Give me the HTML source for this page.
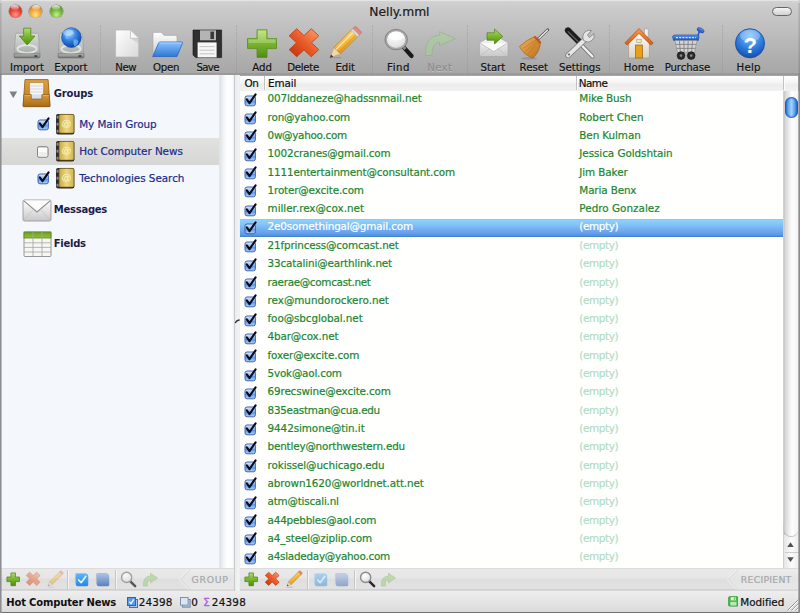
<!DOCTYPE html>
<html><head><meta charset="utf-8"><title>Nelly.mml</title>
<style>
html,body{margin:0;padding:0;}
body{-webkit-text-stroke-width:0.2px;width:800px;height:613px;overflow:hidden;background:#d4d4d4;font-family:"DejaVu Sans","Liberation Sans",sans-serif;font-size:10.2px;color:#000;position:relative;}
#win{position:absolute;left:0;top:0;width:800px;height:613px;background:#b4b4b4;border-radius:3px 3px 0 0;overflow:hidden;}
#chrome{position:absolute;left:0;top:0;width:800px;height:75px;background:linear-gradient(#d6d6d6 0,#cecece 3px,#c3c3c3 22px,#b0b0b0 56px,#a7a7a7 73px,#9a9a9a 73.5px,#9a9a9a 75px);}
#chrome:before{content:"";position:absolute;left:0;top:0;width:800px;height:1px;background:#e4e4e4;}
.tl{position:absolute;top:4.8px;width:13px;height:13px;border-radius:50%;box-shadow:0 0 0 0.5px rgba(0,0,0,.35),0 1px 0 rgba(255,255,255,.5);}
.tl:after{content:"";position:absolute;left:2.5px;top:0.5px;width:8px;height:5px;border-radius:50%;background:linear-gradient(rgba(255,255,255,.85),rgba(255,255,255,.1));}
.ttl{position:absolute;top:3.5px;line-height:16px;color:#1a1a1a;white-space:nowrap;}
#pill{position:absolute;left:772px;top:6.8px;width:18px;height:7.4px;border-radius:5px;border:1px solid #666;background:linear-gradient(#f4f4f4,#d0d0d0);}
.ti{position:absolute;top:27px;width:32px;height:32px;overflow:visible;}
.tl_{position:absolute;top:60.6px;width:80px;text-align:center;line-height:14px;font-size:10.2px;color:#111;text-shadow:0 1px 0 rgba(255,255,255,.3);white-space:nowrap;}
.tl_.dis{color:#8d8d8d;}
.sep{position:absolute;top:25px;width:0;height:48px;border-left:1px dotted #8a8a8a;opacity:.45;}
#side{position:absolute;left:1px;top:75px;width:218px;height:493px;background:#f4f7fb;}
#sidesel{position:absolute;left:0;top:63px;width:218px;height:27px;background:linear-gradient(#e1e1e1,#d6d6d4);}
.sh{position:absolute;font-weight:bold;color:#1c1c4a;line-height:14px;white-space:nowrap;}
.si{position:absolute;color:#1a2c8a;line-height:14px;white-space:nowrap;}
#strack{position:absolute;left:219px;top:75px;width:15px;height:493px;background:linear-gradient(90deg,#e4e8ea 0,#dfe3e6 1px,#eef1f3 4px,#fcfeff 8px,#fbfdfd 13px,#eef0f0 15px);}
#split{position:absolute;left:234px;top:75px;width:6.5px;height:516px;background:linear-gradient(90deg,#c4c8c8 0,#c8cccc 1px,#eceeee 1.5px,#f2f4f4 5px,#e4e6e6 6.5px);}
#table{position:absolute;left:240px;top:75px;width:544px;height:493px;background:#fffffd;overflow:hidden;}
#thead{position:absolute;left:240px;top:75px;width:558px;height:16px;background:linear-gradient(#ffffff 0,#f4f4f4 7px,#ececec 8px,#f1f1f1 15px,#9c9c9c 15px,#9c9c9c 16px);border-top:1px solid #a4a4a4;box-sizing:border-box;}
#thead span{position:absolute;top:0px;line-height:15px;color:#111;white-space:nowrap;}
#thead i{position:absolute;top:0;width:1px;height:14px;background:#c2c2c2;box-shadow:1px 0 0 #fcfcfc;}
.row{position:absolute;left:240px;width:544px;height:18.32px;line-height:18.32px;white-space:nowrap;}
.row.sel{background:linear-gradient(#8cc6ec 0,#8cd0fc 8%,#84c4f8 30%,#72acf0 60%,#66a0ea 78%,#5296ee 90%,#4a84d0 97%,#4a84d0 100%);height:18.3px;margin-top:-0.4px}

.row .cb{position:absolute;left:4px;top:0.5px;width:16px;height:17px;}
.em_{position:absolute;left:27.55px;top:-1.9px;color:#1a8630;font-size:10.4px;}
.nm{position:absolute;left:339.3px;top:-1.9px;color:#1a8630;font-size:10.4px;}
.nm.em{color:#b2dcc6;}
.row.sel .em_,.row.sel .nm{color:#fff;}
#vs{position:absolute;left:783px;top:91px;width:16px;height:477px;background:linear-gradient(90deg,#dcdcdc 0,#c4c4c4 1px,#d8d8d8 2.5px,#e6e6e6 5px,#fdfdfd 9px,#f6f6f6 14px,#ececec 16px);}
#thumb{position:absolute;left:785px;top:97px;width:13px;height:21px;border-radius:7px;background:linear-gradient(90deg,#2a6fd0 0,#6fb0f5 30%,#a5d3ff 50%,#5aa0ee 75%,#1e5fc0 100%);box-shadow:inset 0 0 2px 1px #1a56b0;}
#bbarL{position:absolute;left:1px;top:568px;width:233px;height:23px;background:linear-gradient(#cfcfcf 0,#e9e9e9 1px,#e6e6e6 10px,#dedede 11px,#e2e2e2 21px,#bdbdbd 22px,#f2f2f2 23px);}
#bbarR{position:absolute;left:240px;top:568px;width:559px;height:23px;background:linear-gradient(#cfcfcf 0,#e9e9e9 1px,#e6e6e6 10px,#dedede 11px,#e2e2e2 21px,#bdbdbd 22px,#f2f2f2 23px);}
#status{position:absolute;left:1px;top:591px;width:798px;height:22px;background:linear-gradient(#eeeeee,#e6e6e6 40%,#dadada);}
#botline{position:absolute;left:0;top:611.6px;width:800px;height:1.4px;background:#707070;}
.st{position:absolute;top:595.7px;line-height:14px;color:#111;white-space:nowrap;}
.lab{position:absolute;top:573.2px;line-height:13px;color:#a6a8ac;white-space:nowrap;}
.bsep{position:absolute;top:570px;width:1px;height:19px;background:#c6c6c6;box-shadow:1px 0 0 #f4f4f4;}
.bi{position:absolute;overflow:visible;}
#lborder{position:absolute;left:0;top:75px;width:2px;height:538px;background:linear-gradient(90deg,#8c8e92 0,#8c8e92 1.1px,rgba(140,142,146,0) 2px);}
#lborder2{position:absolute;left:0;top:3px;width:2px;height:72px;background:linear-gradient(90deg,rgba(0,0,0,.13) 0,rgba(0,0,0,.13) 1px,rgba(0,0,0,0) 2px);}
#rborder{position:absolute;left:798px;top:75px;width:2px;height:538px;background:linear-gradient(270deg,#8a8a8a 0,#8a8a8a 1.2px,rgba(138,138,138,0) 2px);}
#rborder2{position:absolute;left:798px;top:3px;width:2px;height:72px;background:linear-gradient(270deg,rgba(0,0,0,.13) 0,rgba(0,0,0,.13) 1px,rgba(0,0,0,0) 2px);}
</style></head><body>
<svg width="0" height="0" style="position:absolute">
<defs>
<linearGradient id="cbg" x1="0" y1="0" x2="0" y2="1"><stop offset="0" stop-color="#dfeafb"/><stop offset=".45" stop-color="#8ab8f0"/><stop offset=".55" stop-color="#5e98e8"/><stop offset="1" stop-color="#a6d6fc"/></linearGradient>
<symbol id="cbx" viewBox="0 0 16 17"><rect x="1" y="4" width="10.4" height="9.8" rx="2" fill="url(#cbg)" stroke="#4464b0" stroke-width="1"/><path d="M2.8 7.4 L5.5 11.2 L11.6 2.3" fill="none" stroke="#0a0a1e" stroke-width="2.1" stroke-linecap="round" stroke-linejoin="round"/></symbol>
<symbol id="cbe" viewBox="0 0 16 17"><rect x="0.4" y="3.8" width="10.6" height="10.4" rx="1.6" fill="#fdfdfd" stroke="#767676" stroke-width="1"/><rect x="1.6" y="9" width="8.2" height="4.4" rx="1" fill="#ededed"/></symbol>
<linearGradient id="gBox" x1="0" y1="0" x2="0" y2="1"><stop offset="0" stop-color="#e0a040"/><stop offset="1" stop-color="#b87420"/></linearGradient>
<linearGradient id="gBook" x1="0" y1="0" x2="1" y2="0"><stop offset="0" stop-color="#c8a840"/><stop offset=".5" stop-color="#ecd882"/><stop offset="1" stop-color="#d0b450"/></linearGradient>
<linearGradient id="gFld" x1="0" y1="0" x2="0" y2="1"><stop offset="0" stop-color="#6e9e20"/><stop offset="1" stop-color="#92c03c"/></linearGradient>
<linearGradient id="gBoxF" x1="0" y1="0" x2="0" y2="1"><stop offset="0" stop-color="#d89a38"/><stop offset="1" stop-color="#a86a18"/></linearGradient>
<symbol id="book" viewBox="0 0 20 24" preserveAspectRatio="none"><rect x="1" y="1" width="18" height="22" rx="2" fill="#2a2a2a"/><rect x="4" y="1.5" width="14.5" height="20" rx="1.5" fill="url(#gBook)" stroke="#8a6210" stroke-width=".6"/><rect x="1.5" y="3" width="2" height="3" fill="#8a8a8a"/><rect x="1.5" y="10.5" width="2" height="3" fill="#8a8a8a"/><rect x="1.5" y="18" width="2" height="3" fill="#8a8a8a"/><text x="11.3" y="15" text-anchor="middle" font-family="Liberation Sans,sans-serif" font-size="10" fill="#fff6c8">@</text></symbol>
<linearGradient id="gChk" x1="0" y1="0" x2="0" y2="1"><stop offset="0" stop-color="#5ab4f6"/><stop offset="1" stop-color="#2a86e4"/></linearGradient>
<linearGradient id="gUnchk" x1="0" y1="0" x2="0" y2="1"><stop offset="0" stop-color="#a8c0e4"/><stop offset="1" stop-color="#5a80bc"/></linearGradient>
<linearGradient id="gChev" x1="0" y1="0" x2="0" y2="1"><stop offset="0" stop-color="#ececec"/><stop offset=".5" stop-color="#e4e4e4"/><stop offset="1" stop-color="#e8e8e8"/></linearGradient>

<linearGradient id="gGreen" x1="0" y1="0" x2="0" y2="1"><stop offset="0" stop-color="#b5dc6a"/><stop offset=".5" stop-color="#7ab52e"/><stop offset="1" stop-color="#4f8c14"/></linearGradient>
<linearGradient id="gRed" x1="0" y1="0" x2="0" y2="1"><stop offset="0" stop-color="#f6905a"/><stop offset=".5" stop-color="#ea5a28"/><stop offset="1" stop-color="#c83a10"/></linearGradient>
<linearGradient id="gTray" x1="0" y1="0" x2="0" y2="1"><stop offset="0" stop-color="#d8dad8"/><stop offset=".6" stop-color="#c0c4c0"/><stop offset="1" stop-color="#a4a8a4"/></linearGradient>
<linearGradient id="gTrayF" x1="0" y1="0" x2="0" y2="1"><stop offset="0" stop-color="#b9bdb9"/><stop offset="1" stop-color="#6e726e"/></linearGradient>
<radialGradient id="gGlobe" cx=".4" cy=".3" r=".75"><stop offset="0" stop-color="#9cd0ff"/><stop offset=".5" stop-color="#2f7ee0"/><stop offset="1" stop-color="#0b3f9a"/></radialGradient>
<linearGradient id="gPage" x1="0" y1="0" x2="1" y2="1"><stop offset="0" stop-color="#ffffff"/><stop offset="1" stop-color="#d9d9d9"/></linearGradient>
<linearGradient id="gFold" x1="0" y1="0" x2="0" y2="1"><stop offset="0" stop-color="#8cc4ff"/><stop offset="1" stop-color="#2c76d6"/></linearGradient>
<linearGradient id="gFoldB" x1="0" y1="0" x2="0" y2="1"><stop offset="0" stop-color="#ffffff"/><stop offset="1" stop-color="#c9ccd0"/></linearGradient>
<linearGradient id="gPencil" x1="0" y1="0" x2="1" y2="1"><stop offset="0" stop-color="#ffd66a"/><stop offset="1" stop-color="#e89a1a"/></linearGradient>
<radialGradient id="gLens" cx=".4" cy=".3" r=".8"><stop offset="0" stop-color="#ffffff"/><stop offset=".7" stop-color="#e4e4e4"/><stop offset="1" stop-color="#bdbdbd"/></radialGradient>
<linearGradient id="gEnv" x1="0" y1="0" x2="0" y2="1"><stop offset="0" stop-color="#ffffff"/><stop offset="1" stop-color="#c8c8c8"/></linearGradient>
<linearGradient id="gBroom" x1="0" y1="0" x2="1" y2="1"><stop offset="0" stop-color="#f2b45a"/><stop offset="1" stop-color="#b8701a"/></linearGradient>
<linearGradient id="gMetal" x1="0" y1="0" x2="1" y2="0"><stop offset="0" stop-color="#f4f4f4"/><stop offset="1" stop-color="#9a9a9a"/></linearGradient>
<linearGradient id="gRoof" x1="0" y1="0" x2="0" y2="1"><stop offset="0" stop-color="#f79a4a"/><stop offset="1" stop-color="#d85a12"/></linearGradient>
<linearGradient id="gWall" x1="0" y1="0" x2="0" y2="1"><stop offset="0" stop-color="#ffffff"/><stop offset="1" stop-color="#d8d2c4"/></linearGradient>
<radialGradient id="gHelp" cx=".5" cy=".25" r=".85"><stop offset="0" stop-color="#7cc0ff"/><stop offset=".55" stop-color="#2a78dc"/><stop offset="1" stop-color="#0d3f9c"/></radialGradient>
<linearGradient id="gCart" x1="0" y1="0" x2="0" y2="1"><stop offset="0" stop-color="#5a9af0"/><stop offset="1" stop-color="#1a4fb8"/></linearGradient>
</defs></svg>
<div id="win">
<div id="chrome">
 <div class="tl" style="left:8.8px;background:radial-gradient(circle at 50% 75%,#ff9a8a 0,#e8463a 45%,#a81c12 100%)"></div>
 <div class="tl" style="left:29.3px;background:radial-gradient(circle at 50% 75%,#ffe28a 0,#f0a63a 45%,#b8660e 100%)"></div>
 <div class="tl" style="left:49.8px;background:radial-gradient(circle at 50% 75%,#c8f08a 0,#74b83a 45%,#3a7a14 100%)"></div>
 <span class="ttl" style="left:369.30px;font-size:12.3px;letter-spacing:-0.021px;">Nelly.mml</span>
 <div id="pill"></div>
 <svg class="ti" style="left:11px" viewBox="0 0 32 32"><path d="M4.6 7.2 Q4.8 6.2 5.8 6.2 L26.2 6.2 Q27.2 6.2 27.4 7.2 L29 26.8 L3 26.8 Z" fill="url(#gTray)" stroke="#9a9e9a" stroke-width=".7"/><ellipse cx="16" cy="22" rx="9.6" ry="3.9" fill="none" stroke="#f4f4f4" stroke-width="2" opacity=".65"/><path d="M3 26.8 L29 26.8 L29 29.8 Q29 31 27.8 31 L4.2 31 Q3 31 3 29.8 Z" fill="url(#gTrayF)" stroke="#5e625e" stroke-width=".5"/><rect x="23.4" y="28.4" width="3" height="1.3" fill="#2a2a2a"/><path d="M12.6 1.2 L19.8 1.2 L19.8 9 L24 9 L16.2 18 L8.4 9 L12.6 9 Z" fill="url(#gGreen)" stroke="#4a7f16" stroke-width=".7"/></svg>
<span class="tl_" style="left:-12.99px;letter-spacing:0.029px">Import</span>
<svg class="ti" style="left:55px" viewBox="0 0 32 32"><path d="M4.6 7.2 Q4.8 6.2 5.8 6.2 L26.2 6.2 Q27.2 6.2 27.4 7.2 L29 26.8 L3 26.8 Z" fill="url(#gTray)" stroke="#9a9e9a" stroke-width=".7"/><ellipse cx="16" cy="22" rx="9.6" ry="3.9" fill="none" stroke="#f4f4f4" stroke-width="2" opacity=".65"/><path d="M3 26.8 L29 26.8 L29 29.8 Q29 31 27.8 31 L4.2 31 Q3 31 3 29.8 Z" fill="url(#gTrayF)" stroke="#5e625e" stroke-width=".5"/><rect x="23.4" y="28.4" width="3" height="1.3" fill="#2a2a2a"/><circle cx="16.4" cy="10.6" r="9.9" fill="url(#gGlobe)" stroke="#1a4a9a" stroke-width=".6"/><path d="M10 7 q3 -4 7 -3 q2 2 -1 4 q-3 1 -3 4 q-3 0 -3 -5Z M18.5 12.5 q4 -1 5 2 q-1 4 -4 5 q-2 -3 -1 -7Z" fill="#7ec0ff" opacity=".7"/><ellipse cx="13.5" cy="5.8" rx="5.4" ry="3.2" fill="#fff" opacity=".35"/></svg>
<span class="tl_" style="left:30.89px;letter-spacing:-0.028px">Export</span>
<svg class="ti" style="left:110px" viewBox="0 0 32 32"><path d="M5.6 3 L20.5 3 L28.8 11.3 L28.8 30 L5.6 30 Z" fill="url(#gPage)" stroke="#b4b4b4" stroke-width=".7"/><path d="M20.5 3 L20.5 11.3 L28.8 11.3 Z" fill="#f8f8f8" stroke="#b4b4b4" stroke-width=".6"/><path d="M20.5 11.3 L28.8 11.3 L28.8 16.5 Z" fill="#bdbdbd" opacity=".55"/></svg>
<span class="tl_" style="left:85.81px;letter-spacing:-0.374px">New</span>
<svg class="ti" style="left:150px" viewBox="0 0 32 32"><path d="M3 28 L3 7 Q3 5.4 4.6 5.4 L11.5 5.4 L14 8.4 L25.5 8.4 Q27 8.4 27 10 L27 28 Z" fill="url(#gFoldB)" stroke="#a4a8ae" stroke-width=".6"/><path d="M2.6 29.6 L8.6 16 Q9 15 10.1 15 L31.6 15 Q32.8 15 32.4 16.2 L27 29.6 Z" fill="url(#gFold)" stroke="#1f5fb8" stroke-width=".7"/><path d="M9.4 16 L31.6 16" stroke="#b8dcff" stroke-width="1" opacity=".8"/></svg>
<span class="tl_" style="left:126.16px;letter-spacing:-0.181px">Open</span>
<svg class="ti" style="left:191px" viewBox="0 0 32 32"><path d="M2 3 L30.6 3 L30.6 30.6 L4.6 30.6 L2 28 Z" fill="#303030" stroke="#111" stroke-width=".6"/><rect x="9" y="3.3" width="16" height="10" fill="#b4b4b4"/><rect x="19.4" y="4.6" width="3.6" height="7.4" fill="#3a3a3a"/><rect x="6.6" y="15.4" width="19" height="15" fill="#f6f6f6"/><path d="M8.6 19.6h15M8.6 23.2h15M8.6 26.8h15" stroke="#c4c4c4" stroke-width="1"/></svg>
<span class="tl_" style="left:167.64px;letter-spacing:-0.712px">Save</span>
<svg class="ti" style="left:245.7px" viewBox="0 0 32 32"><path d="M11 2.8 L21 2.8 L21 11.6 L30.5 11.6 L30.5 21.6 L21 21.6 L21 30.4 L11 30.4 L11 21.6 L1.5 21.6 L1.5 11.6 L11 11.6 Z" fill="url(#gGreen)" stroke="#568f1a" stroke-width=".8" stroke-linejoin="round"/><path d="M12 3.8 L20 3.8 L20 12.6 L29.5 12.6 L29.5 16 L2.5 16 L2.5 12.6 L12 12.6Z" fill="#fff" opacity=".22"/></svg>
<span class="tl_" style="left:222.10px;letter-spacing:0.001px">Add</span>
<svg class="ti" style="left:287.5px" viewBox="0 0 32 32"><g transform="translate(16 15.75) scale(1 .95) rotate(45)"><path d="M-5.3 -15.6 L5.3 -15.6 L5.3 -5.3 L15.6 -5.3 L15.6 5.3 L5.3 5.3 L5.3 15.6 L-5.3 15.6 L-5.3 5.3 L-15.6 5.3 L-15.6 -5.3 L-5.3 -5.3 Z" fill="url(#gRed)" stroke="#c03a10" stroke-width=".8" stroke-linejoin="round"/></g></svg>
<span class="tl_" style="left:263.05px;letter-spacing:-0.303px">Delete</span>
<svg class="ti" style="left:329px" viewBox="0 0 32 32"><g transform="translate(15.2 16.6) rotate(45)"><rect x="-4.6" y="-16" width="9.2" height="26" fill="url(#gPencil)" stroke="#b8740e" stroke-width=".6"/><rect x="-4.6" y="-20.4" width="9.2" height="4.2" rx="1.4" fill="#e8867a" stroke="#b85a50" stroke-width=".5"/><rect x="-4.6" y="-16.8" width="9.2" height="2.8" fill="#d8d8d8" stroke="#999" stroke-width=".4"/><path d="M-4.6 10 L4.6 10 L0 20.4 Z" fill="#f2d8a8" stroke="#b8905a" stroke-width=".5"/><path d="M-1.5 17 L1.5 17 L0 20.4Z" fill="#333"/><path d="M-1.6 -14 L-1.6 10" stroke="#fff2c0" stroke-width="1.6" opacity=".7"/><path d="M2.4 -14 L2.4 10" stroke="#c8801a" stroke-width="1" opacity=".5"/></g><path d="M1 30.6 h11" stroke="#777" stroke-width="1.2" opacity=".4"/></svg>
<span class="tl_" style="left:305.24px;letter-spacing:-0.018px">Edit</span>
<svg class="ti" style="left:383px" viewBox="0 0 32 32"><path d="M21 20.6 L28.6 29" stroke="#1a1a1a" stroke-width="4.2" stroke-linecap="round"/><path d="M19.4 18.8 L22.4 22" stroke="#8a8a8a" stroke-width="3"/><ellipse cx="13.2" cy="12.6" rx="10.3" ry="9.4" fill="url(#gLens)" stroke="#a8a8a8" stroke-width="2"/><ellipse cx="13.2" cy="12.6" rx="11.3" ry="10.3" fill="none" stroke="#5a5a5a" stroke-width=".5"/><path d="M5 11 Q13.2 15.5 21.4 11 Q20 4.8 13.2 4.8 Q6.4 4.8 5 11Z" fill="#fff" opacity=".8"/></svg>
<span class="tl_" style="left:358.44px;letter-spacing:0.484px">Find</span>
<svg class="ti" style="left:423px" viewBox="0 0 32 32"><g opacity=".55"><path d="M2.5 28.5 Q1.5 9 16.5 8 L16.5 4.6 L32.5 11.6 L16.5 18.6 L16.5 15 Q9 15.5 8.8 28.5 Z" fill="#a6d294" stroke="#7fb070" stroke-width=".8" stroke-linejoin="round"/></g></svg>
<span class="tl_ dis" style="left:399.75px;letter-spacing:0.296px">Next</span>
<svg class="ti" style="left:477px" viewBox="0 0 32 32"><path d="M2.6 15.5 L16.8 8 L31 15.5 L31 29.6 L2.6 29.6 Z" fill="url(#gEnv)" stroke="#a8a8a8" stroke-width=".7"/><path d="M3 16 L16.8 24.6 L30.6 16" fill="#fafafa" stroke="#b4b4b4" stroke-width=".7"/><path d="M3 29.2 L13 21.6 M30.6 29.2 L20.6 21.6" stroke="#bcbcbc" stroke-width=".7"/><path d="M10 5.8 L17.5 5.8 L17.5 2 L25.8 9.5 L17.5 17 L17.5 13.2 L10 13.2 Z" fill="url(#gGreen)" stroke="#4a7f16" stroke-width=".7" stroke-linejoin="round"/></svg>
<span class="tl_" style="left:452.87px;letter-spacing:-0.067px">Start</span>
<svg class="ti" style="left:518px" viewBox="0 0 32 32"><ellipse cx="11" cy="31.4" rx="8" ry="1.3" fill="#5a5a7a" opacity=".3"/><path d="M29.8 2.8 L19 13" stroke="#5a5a5a" stroke-width="2.8" stroke-linecap="round"/><path d="M29.4 3.2 L21 11.2" stroke="#ececec" stroke-width="1.3" stroke-linecap="round"/><path d="M17 9.5 L22.5 15.5 Q21.5 25 15 31 Q6 28.5 1.5 19.5 Q9 12.5 17 9.5Z" fill="url(#gBroom)" stroke="#a8641a" stroke-width=".7"/><path d="M5 21.5 Q12 17 18.5 12.5 M9.5 27 Q15 21 20.5 14.5 M7 24.5 Q13.5 19 19.5 13.5" stroke="#a8641a" stroke-width=".6" fill="none" opacity=".7"/><path d="M16.4 9.4 L22.6 16" stroke="#c8501a" stroke-width="2"/></svg>
<span class="tl_" style="left:493.85px;letter-spacing:0.002px">Reset</span>
<svg class="ti" style="left:564px" viewBox="0 0 32 32"><path d="M28.5 29.5 L14 14.5" stroke="#7a7a7a" stroke-width="4" stroke-linecap="round"/><path d="M28.5 29.5 L14 14.5" stroke="#f0f0f0" stroke-width="2.4" stroke-linecap="round"/><path d="M4 3.5 L16 15.5" stroke="#1c1c1c" stroke-width="6.2" stroke-linecap="round"/><path d="M4.2 4.8 L14 14.5" stroke="#5a5a5a" stroke-width="1.4" stroke-linecap="round"/><path d="M4 28.5 L20.5 13" stroke="#7c7c7c" stroke-width="5.4" stroke-linecap="round"/><path d="M4 28.5 L20.5 13" stroke="#e6e6e6" stroke-width="3.8" stroke-linecap="round"/><path d="M20 14 Q17 8.5 21.5 4.5 Q24.5 2.5 27.5 3.5 L23.5 8 L25.5 10.5 L30 6.5 Q31 10.5 28 13.5 Q24.5 16.5 20 14Z" fill="#e4e4e4" stroke="#7c7c7c" stroke-width=".8"/><circle cx="5" cy="27.5" r="1.1" fill="#6a6a6a"/></svg>
<span class="tl_" style="left:539.78px;letter-spacing:-0.034px">Settings</span>
<svg class="ti" style="left:622.9px" viewBox="0 0 32 32"><rect x="21.5" y="2" width="3.6" height="8" fill="#f2f2f2" stroke="#9a9a9a" stroke-width=".5"/><path d="M5.6 14.5 L16 5 L26.4 14.5 L26.4 31 L5.6 31 Z" fill="url(#gWall)" stroke="#a89a80" stroke-width=".7"/><path d="M1.8 16 L16 1.6 L30.2 16 L27.8 18 L16 6.4 L4.2 18 Z" fill="url(#gRoof)" stroke="#b84a0e" stroke-width=".7" stroke-linejoin="round"/><rect x="12.5" y="18" width="7" height="13" fill="#e8a01a" stroke="#9a6208" stroke-width=".7"/><rect x="13.8" y="12.2" width="4.4" height="3.4" fill="#f4e6b0" stroke="#9a8a60" stroke-width=".5"/></svg>
<span class="tl_" style="left:598.92px;letter-spacing:0.043px">Home</span>
<svg class="ti" style="left:671px" viewBox="0 0 32 32"><path d="M28.4 4.6 L26 11" stroke="#2a5fc8" stroke-width="1.6"/><ellipse cx="29.6" cy="3.2" rx="3.8" ry="2.1" transform="rotate(28 29.6 3.2)" fill="url(#gCart)" stroke="#173f98" stroke-width=".5"/><path d="M1.6 10 Q1.6 8 4 8 L26 8 Q28.4 8 28 10.2 L27.2 13.4 L2.6 13.4 Z" fill="url(#gCart)" stroke="#173f98" stroke-width=".6"/><path d="M5 10.6 h20" stroke="#cfe2ff" stroke-width="1.4" stroke-dasharray="2 1.2"/><path d="M4 13.4 L6.5 25.4 L23.5 25.4 L26 13.4 Z" fill="#d4d4d4" stroke="#8a8a8a" stroke-width=".6"/><path d="M8.4 13.4 L9.4 25.4 M12.8 13.4 L13.2 25.4 M17.2 13.4 L16.8 25.4 M21.6 13.4 L20.6 25.4 M4.8 17.4 H25.2 M5.6 21.4 H24.4" stroke="#7a7a7a" stroke-width=".8"/><circle cx="10" cy="28.6" r="3.9" fill="#2a2a2a" stroke="#111" stroke-width=".5"/><circle cx="20.2" cy="28.6" r="3.9" fill="#2a2a2a" stroke="#111" stroke-width=".5"/><circle cx="10" cy="28.6" r="1.3" fill="#8a8a8a"/><circle cx="20.2" cy="28.6" r="1.3" fill="#8a8a8a"/></svg>
<span class="tl_" style="left:647.41px;letter-spacing:-0.089px">Purchase</span>
<svg class="ti" style="left:733.5px" viewBox="0 0 32 32"><circle cx="16" cy="16.3" r="14.6" fill="url(#gHelp)" stroke="#1a4a9c" stroke-width=".8"/><ellipse cx="16" cy="8.8" rx="10" ry="6" fill="#fff" opacity=".28"/><text x="16.2" y="25.6" text-anchor="middle" font-family="Liberation Sans,sans-serif" font-weight="bold" font-size="22" fill="#fff">?</text></svg>
<span class="tl_" style="left:708.72px;letter-spacing:0.249px">Help</span>
<div class="sep" style="left:100px"></div>
<div class="sep" style="left:236px"></div>
<div class="sep" style="left:372px"></div>
<div class="sep" style="left:467px"></div>
<div class="sep" style="left:609px"></div>
<div class="sep" style="left:722px"></div>
</div>
<div id="side">
 <div id="sidesel"></div>
 <svg style="position:absolute;left:8.4px;top:15.6px" width="8.6" height="7.6" viewBox="0 0 12 10" preserveAspectRatio="none"><path d="M0.6 0.8 L11.4 0.8 L6 9.4 Z" fill="#808080"/></svg>
<svg style="position:absolute;left:22px;top:4px;overflow:visible" width="27" height="28" viewBox="0 0 27 28">
 <path d="M2 0.6 L25.1 0.6 L27 27 Q27 27.6 26.4 27.6 L0.7 27.6 Q0.1 27.6 0.1 27 Z" fill="url(#gBox)" stroke="#8a5a10" stroke-width=".8"/>
 <path d="M6.4 3.6 L20.8 3.6 L20.3 20 L6.9 20 Z" fill="#f6f6f6" stroke="#a87018" stroke-width=".6"/>
 <path d="M6.6 7 h14 M6.7 10 h13.8 M6.8 13 h13.6" stroke="#cfcfcf" stroke-width=".8"/>
 <path d="M6.9 15.6 L20.4 15.6 L20.3 20 L6.9 20Z" fill="#d4e0ee"/>
 <path d="M0.9 15.6 L8.25 15.6 L8.25 20 L18.9 20 L18.9 15.6 L26.2 15.6 L27 27 Q27 27.6 26.4 27.6 L0.7 27.6 Q0.1 27.6 0.1 27 Z" fill="url(#gBoxF)" stroke="#8a5a10" stroke-width=".7"/>
 <path d="M1.4 16.4 L7.6 16.4 M19.6 16.4 L25.8 16.4" stroke="#f0c070" stroke-width=".8" opacity=".8"/>
</svg>
<svg class="cb" style="position:absolute;left:36px;top:40.5px;width:16px;height:17px"><use href="#cbx"/></svg>
<svg style="position:absolute;left:54px;top:37.5px" width="20.4" height="22.4"><use href="#book"/></svg>

<svg class="cb" style="position:absolute;left:36px;top:67.5px;width:16px;height:17px"><use href="#cbe"/></svg>
<svg style="position:absolute;left:54px;top:64.5px" width="20.4" height="22.4"><use href="#book"/></svg>

<svg class="cb" style="position:absolute;left:36px;top:94.5px;width:16px;height:17px"><use href="#cbx"/></svg>
<svg style="position:absolute;left:54px;top:91.5px" width="20.4" height="22.4"><use href="#book"/></svg>

<svg style="position:absolute;left:21px;top:123.6px" width="30" height="23" viewBox="0 0 30 23">
 <rect x="1" y="1" width="28" height="21" rx="1.5" fill="url(#gEnv)" stroke="#9a9a9a" stroke-width=".9"/>
 <path d="M1.6 1.6 L15 13 L28.4 1.6" fill="#fdfdfd" stroke="#8e8e8e" stroke-width="1.1"/>
 <path d="M1.6 21.4 L11.6 10.4 M28.4 21.4 L18.4 10.4" stroke="#c0c0c0" stroke-width=".7"/>
</svg>

<svg style="position:absolute;left:21.5px;top:156px" width="29" height="26.5" viewBox="0 0 29 26.5">
 <rect x="1" y="1" width="27" height="24.5" rx="1" fill="#f6f6f2" stroke="#8a8a8a" stroke-width=".9"/>
 <rect x="1" y="1" width="27" height="6" fill="url(#gFld)" stroke="#5a8a1a" stroke-width=".8"/>
 <path d="M1 11.8h27M1 16.4h27M1 21h27M10 1v24.5M19 1v24.5" stroke="#a4a4a4" stroke-width=".8"/>
</svg>
<span class="sh" style="left:52.75px;font-size:10.0px;font-weight:bold;-webkit-text-stroke-width:0;letter-spacing:-0.158px;top:12px">Groups</span>
<span class="sh" style="left:52.75px;font-size:10.0px;font-weight:bold;-webkit-text-stroke-width:0;letter-spacing:-0.247px;top:128px">Messages</span>
<span class="sh" style="left:52.75px;font-size:10.0px;font-weight:bold;-webkit-text-stroke-width:0;letter-spacing:-0.256px;top:162px">Fields</span>
<span class="si" style="left:78.20px;font-size:10.4px;letter-spacing:-0.053px;top:42px">My Main Group</span>
<span class="si" style="left:78.20px;font-size:10.4px;letter-spacing:-0.061px;top:69px">Hot Computer News</span>
<span class="si" style="left:78.20px;font-size:10.4px;letter-spacing:-0.030px;top:96px">Technologies Search</span>
</div>
<div id="strack"></div>
<div id="split"></div>
<div id="table"></div>
<div class="row" style="top:91.20px"><svg class="cb"><use href="#cbx"/></svg><span class="em_" style="letter-spacing:-0.109px">007lddaneze@hadssnmail.net</span><span class="nm" style="letter-spacing:-0.088px">Mike Bush</span></div>
<div class="row" style="top:109.52px"><svg class="cb"><use href="#cbx"/></svg><span class="em_" style="letter-spacing:-0.153px">ron@yahoo.com</span><span class="nm" style="letter-spacing:-0.038px">Robert Chen</span></div>
<div class="row" style="top:127.84px"><svg class="cb"><use href="#cbx"/></svg><span class="em_" style="letter-spacing:-0.269px">0w@yahoo.com</span><span class="nm" style="letter-spacing:-0.090px">Ben Kulman</span></div>
<div class="row" style="top:146.16px"><svg class="cb"><use href="#cbx"/></svg><span class="em_" style="letter-spacing:-0.147px">1002cranes@gmail.com</span><span class="nm" style="letter-spacing:-0.056px">Jessica Goldshtain</span></div>
<div class="row" style="top:164.48px"><svg class="cb"><use href="#cbx"/></svg><span class="em_" style="letter-spacing:-0.136px">1111entertainment@consultant.com</span><span class="nm" style="letter-spacing:-0.091px">Jim Baker</span></div>
<div class="row" style="top:182.80px"><svg class="cb"><use href="#cbx"/></svg><span class="em_" style="letter-spacing:-0.154px">1roter@excite.com</span><span class="nm" style="letter-spacing:-0.136px">Maria Benx</span></div>
<div class="row" style="top:201.12px"><svg class="cb"><use href="#cbx"/></svg><span class="em_" style="letter-spacing:-0.025px">miller.rex@cox.net</span><span class="nm" style="letter-spacing:0.022px">Pedro Gonzalez</span></div>
<div class="row sel" style="top:219.44px"><svg class="cb"><use href="#cbx"/></svg><span class="em_" style="letter-spacing:-0.131px">2e0somethingal@gmail.com</span><span class="nm em" style="letter-spacing:-0.371px">(empty)</span></div>
<div class="row" style="top:237.76px"><svg class="cb"><use href="#cbx"/></svg><span class="em_" style="letter-spacing:-0.149px">21fprincess@comcast.net</span><span class="nm em" style="letter-spacing:-0.371px">(empty)</span></div>
<div class="row" style="top:256.08px"><svg class="cb"><use href="#cbx"/></svg><span class="em_" style="letter-spacing:-0.138px">33catalini@earthlink.net</span><span class="nm em" style="letter-spacing:-0.371px">(empty)</span></div>
<div class="row" style="top:274.40px"><svg class="cb"><use href="#cbx"/></svg><span class="em_" style="letter-spacing:-0.304px">raerae@comcast.net</span><span class="nm em" style="letter-spacing:-0.371px">(empty)</span></div>
<div class="row" style="top:292.72px"><svg class="cb"><use href="#cbx"/></svg><span class="em_" style="letter-spacing:-0.020px">rex@mundorockero.net</span><span class="nm em" style="letter-spacing:-0.371px">(empty)</span></div>
<div class="row" style="top:311.04px"><svg class="cb"><use href="#cbx"/></svg><span class="em_" style="letter-spacing:-0.085px">foo@sbcglobal.net</span><span class="nm em" style="letter-spacing:-0.371px">(empty)</span></div>
<div class="row" style="top:329.36px"><svg class="cb"><use href="#cbx"/></svg><span class="em_" style="letter-spacing:-0.142px">4bar@cox.net</span><span class="nm em" style="letter-spacing:-0.371px">(empty)</span></div>
<div class="row" style="top:347.68px"><svg class="cb"><use href="#cbx"/></svg><span class="em_" style="letter-spacing:-0.094px">foxer@excite.com</span><span class="nm em" style="letter-spacing:-0.371px">(empty)</span></div>
<div class="row" style="top:366.00px"><svg class="cb"><use href="#cbx"/></svg><span class="em_" style="letter-spacing:-0.200px">5vok@aol.com</span><span class="nm em" style="letter-spacing:-0.371px">(empty)</span></div>
<div class="row" style="top:384.32px"><svg class="cb"><use href="#cbx"/></svg><span class="em_" style="letter-spacing:-0.145px">69recswine@excite.com</span><span class="nm em" style="letter-spacing:-0.371px">(empty)</span></div>
<div class="row" style="top:402.64px"><svg class="cb"><use href="#cbx"/></svg><span class="em_" style="letter-spacing:-0.262px">835eastman@cua.edu</span><span class="nm em" style="letter-spacing:-0.371px">(empty)</span></div>
<div class="row" style="top:420.96px"><svg class="cb"><use href="#cbx"/></svg><span class="em_" style="letter-spacing:-0.078px">9442simone@tin.it</span><span class="nm em" style="letter-spacing:-0.371px">(empty)</span></div>
<div class="row" style="top:439.28px"><svg class="cb"><use href="#cbx"/></svg><span class="em_" style="letter-spacing:-0.176px">bentley@northwestern.edu</span><span class="nm em" style="letter-spacing:-0.371px">(empty)</span></div>
<div class="row" style="top:457.60px"><svg class="cb"><use href="#cbx"/></svg><span class="em_" style="letter-spacing:-0.108px">rokissel@uchicago.edu</span><span class="nm em" style="letter-spacing:-0.371px">(empty)</span></div>
<div class="row" style="top:475.92px"><svg class="cb"><use href="#cbx"/></svg><span class="em_" style="letter-spacing:-0.106px">abrown1620@worldnet.att.net</span><span class="nm em" style="letter-spacing:-0.371px">(empty)</span></div>
<div class="row" style="top:494.24px"><svg class="cb"><use href="#cbx"/></svg><span class="em_" style="letter-spacing:-0.194px">atm@tiscali.nl</span><span class="nm em" style="letter-spacing:-0.371px">(empty)</span></div>
<div class="row" style="top:512.56px"><svg class="cb"><use href="#cbx"/></svg><span class="em_" style="letter-spacing:-0.180px">a44pebbles@aol.com</span><span class="nm em" style="letter-spacing:-0.371px">(empty)</span></div>
<div class="row" style="top:530.88px"><svg class="cb"><use href="#cbx"/></svg><span class="em_" style="letter-spacing:-0.104px">a4_steel@ziplip.com</span><span class="nm em" style="letter-spacing:-0.371px">(empty)</span></div>
<div class="row" style="top:549.20px"><svg class="cb"><use href="#cbx"/></svg><span class="em_" style="letter-spacing:-0.244px">a4sladeday@yahoo.com</span><span class="nm em" style="letter-spacing:-0.371px">(empty)</span></div>
<div id="thead"><span class="th" style="left:4.40px;font-size:10.4px;letter-spacing:-0.278px;">On</span>
<span class="th" style="left:28.05px;font-size:10.4px;letter-spacing:-0.126px;">Email</span>
<span class="th" style="left:338.80px;font-size:10.4px;letter-spacing:-0.561px;">Name</span><i style="left:24px"></i><i style="left:336px"></i><i style="left:543px"></i></div>
<div id="vs"></div>
<div id="thumb"></div>
<div id="bbarL"></div>
<div id="bbarR"></div>
<div id="status"></div>
<svg class="bi" style="left:5.7px;top:571.9px;opacity:1" width="14.4" height="14.6" viewBox="0 0 32 32" preserveAspectRatio="none"><path d="M11 2 L21 2 L21 11 L30 11 L30 21 L21 21 L21 30 L11 30 L11 21 L2 21 L2 11 L11 11 Z" fill="url(#gGreen)" stroke="#4a8214" stroke-width="1.6" stroke-linejoin="round"/></svg>
<svg class="bi" style="left:26.3px;top:572.3px;opacity:0.45" width="14.4" height="13.6" viewBox="0 0 32 32" preserveAspectRatio="none"><g transform="rotate(45 16 16)"><path d="M10.6 -0.5 L21.4 -0.5 L21.4 10.6 L32.5 10.6 L32.5 21.4 L21.4 21.4 L21.4 32.5 L10.6 32.5 L10.6 21.4 L-0.5 21.4 L-0.5 10.6 L10.6 10.6 Z" fill="url(#gRed)" stroke="#c03a10" stroke-width="1.4" stroke-linejoin="round"/></g></svg>
<svg class="bi" style="left:46px;top:571px;opacity:0.45" width="17" height="17" viewBox="0 0 32 32"><g transform="rotate(45 16 16)"><rect x="12.5" y="-1" width="7" height="27" fill="url(#gPencil)" stroke="#b8740e" stroke-width="1"/><rect x="12.5" y="-4.5" width="7" height="3.5" rx="1.2" fill="#e8867a" stroke="#b85a50" stroke-width=".8"/><path d="M12.5 26 L19.5 26 L16 33.5 Z" fill="#f2d8a8" stroke="#b8905a" stroke-width=".8"/><path d="M14.6 30.5 L17.4 30.5 L16 33.5Z" fill="#333"/></g><path d="M3 30.5 h12" stroke="#9a9a9a" stroke-width="1.6" opacity=".6"/></svg>
<div class="bsep" style="left:67px"></div>
<svg class="bi" style="left:74px;top:572px;opacity:1" width="15" height="15" viewBox="0 0 16 16"><rect x="1" y="1" width="13" height="13" rx="2" fill="#8fc8f6"/><rect x="2.2" y="2.2" width="13" height="13" rx="2" fill="url(#gChk)"/><path d="M5 8.5 L7.6 11.4 L12.6 4.6" fill="none" stroke="#e4f3ff" stroke-width="1.8" stroke-linecap="round" stroke-linejoin="round"/></svg>
<svg class="bi" style="left:95px;top:572px;opacity:1" width="15" height="15" viewBox="0 0 16 16"><rect x="1" y="1" width="13" height="13" rx="2" fill="#a8bcdc"/><rect x="2.2" y="2.2" width="13" height="13" rx="2" fill="url(#gUnchk)"/></svg>
<div class="bsep" style="left:115px"></div>
<svg class="bi" style="left:120px;top:571px;opacity:0.75" width="17" height="17" viewBox="0 0 32 32"><path d="M19.5 19.5 L28.5 28.5" stroke="#2a2a2a" stroke-width="4.6" stroke-linecap="round"/><circle cx="12.5" cy="12" r="9.6" fill="url(#gLens)" stroke="#8c8c8c" stroke-width="2.6"/></svg>
<svg class="bi" style="left:142px;top:572px;opacity:0.6" width="16" height="15" viewBox="0 0 32 30"><path d="M3 28 Q1.5 8.5 17 8 L17 2.5 L31 12 L17 21.5 L17 16 Q9.5 16 10.5 28 Z" fill="#a8d08a" stroke="#86b268" stroke-width="1.2" stroke-linejoin="round"/></svg>
<svg style="position:absolute;left:179px;top:569px" width="55" height="21" viewBox="0 0 55 21"><path d="M55 0.5 L11 0.5 L1 10.5 L11 20.5 L55 20.5 Z" fill="url(#gChev)"/><path d="M11 0.5 L1 10.5 L11 20.5" fill="none" stroke="#cdcdcd" stroke-width="1"/><path d="M10 0.5 L0 10.5 L10 20.5" fill="none" stroke="#f6f6f6" stroke-width="1"/></svg>
<svg class="bi" style="left:243.7px;top:571.9px;opacity:1" width="14.4" height="14.6" viewBox="0 0 32 32" preserveAspectRatio="none"><path d="M11 2 L21 2 L21 11 L30 11 L30 21 L21 21 L21 30 L11 30 L11 21 L2 21 L2 11 L11 11 Z" fill="url(#gGreen)" stroke="#4a8214" stroke-width="1.6" stroke-linejoin="round"/></svg>
<svg class="bi" style="left:265.3px;top:572.3px;opacity:1" width="14.4" height="13.6" viewBox="0 0 32 32" preserveAspectRatio="none"><g transform="rotate(45 16 16)"><path d="M10.6 -0.5 L21.4 -0.5 L21.4 10.6 L32.5 10.6 L32.5 21.4 L21.4 21.4 L21.4 32.5 L10.6 32.5 L10.6 21.4 L-0.5 21.4 L-0.5 10.6 L10.6 10.6 Z" fill="url(#gRed)" stroke="#c03a10" stroke-width="1.4" stroke-linejoin="round"/></g></svg>
<svg class="bi" style="left:285px;top:571px;opacity:1" width="17" height="17" viewBox="0 0 32 32"><g transform="rotate(45 16 16)"><rect x="12.5" y="-1" width="7" height="27" fill="url(#gPencil)" stroke="#b8740e" stroke-width="1"/><rect x="12.5" y="-4.5" width="7" height="3.5" rx="1.2" fill="#e8867a" stroke="#b85a50" stroke-width=".8"/><path d="M12.5 26 L19.5 26 L16 33.5 Z" fill="#f2d8a8" stroke="#b8905a" stroke-width=".8"/><path d="M14.6 30.5 L17.4 30.5 L16 33.5Z" fill="#333"/></g><path d="M3 30.5 h12" stroke="#9a9a9a" stroke-width="1.6" opacity=".6"/></svg>
<div class="bsep" style="left:307px"></div>
<svg class="bi" style="left:313px;top:572px;opacity:0.45" width="15" height="15" viewBox="0 0 16 16"><rect x="1" y="1" width="13" height="13" rx="2" fill="#8fc8f6"/><rect x="2.2" y="2.2" width="13" height="13" rx="2" fill="url(#gChk)"/><path d="M5 8.5 L7.6 11.4 L12.6 4.6" fill="none" stroke="#e4f3ff" stroke-width="1.8" stroke-linecap="round" stroke-linejoin="round"/></svg>
<svg class="bi" style="left:334px;top:572px;opacity:0.6" width="15" height="15" viewBox="0 0 16 16"><rect x="1" y="1" width="13" height="13" rx="2" fill="#a8bcdc"/><rect x="2.2" y="2.2" width="13" height="13" rx="2" fill="url(#gUnchk)"/></svg>
<div class="bsep" style="left:354px"></div>
<svg class="bi" style="left:359px;top:571px;opacity:1" width="17" height="17" viewBox="0 0 32 32"><path d="M19.5 19.5 L28.5 28.5" stroke="#2a2a2a" stroke-width="4.6" stroke-linecap="round"/><circle cx="12.5" cy="12" r="9.6" fill="url(#gLens)" stroke="#8c8c8c" stroke-width="2.6"/></svg>
<svg class="bi" style="left:380px;top:572px;opacity:0.6" width="16" height="15" viewBox="0 0 32 30"><path d="M3 28 Q1.5 8.5 17 8 L17 2.5 L31 12 L17 21.5 L17 16 Q9.5 16 10.5 28 Z" fill="#a8d08a" stroke="#86b268" stroke-width="1.2" stroke-linejoin="round"/></svg>
<svg style="position:absolute;left:727px;top:569px" width="72" height="21" viewBox="0 0 72 21"><path d="M72 0.5 L11 0.5 L1 10.5 L11 20.5 L72 20.5 Z" fill="url(#gChev)"/><path d="M11 0.5 L1 10.5 L11 20.5" fill="none" stroke="#cdcdcd" stroke-width="1"/><path d="M10 0.5 L0 10.5 L10 20.5" fill="none" stroke="#f6f6f6" stroke-width="1"/></svg>
<svg style="position:absolute;left:127px;top:597px" width="11" height="11" viewBox="0 0 11 11"><rect x="2.5" y="2.5" width="8" height="8" fill="#a4c8f2" stroke="#3a74c8" stroke-width="1"/><rect x=".5" y=".5" width="8" height="8" fill="#5a9ae8" stroke="#2a64c0" stroke-width="1"/><path d="M2.3 4.6 L4 6.6 L6.8 2.4" fill="none" stroke="#f0f8ff" stroke-width="1.4"/></svg>
<svg style="position:absolute;left:180px;top:597px" width="11" height="11" viewBox="0 0 11 11"><rect x="2.5" y="2.5" width="7.6" height="7.6" fill="#c0d0e0" stroke="#6a86a6" stroke-width="1"/><rect x=".5" y=".5" width="7.6" height="7.6" fill="#dce6f0" stroke="#7a92ae" stroke-width="1"/></svg>
<svg style="position:absolute;left:727.6px;top:596px" width="10.8" height="10.8" viewBox="0 0 12 12"><rect x=".8" y=".8" width="10.4" height="10.4" rx="1" fill="#46c046" stroke="#2a982a" stroke-width="1"/><rect x="3" y="1.4" width="5.6" height="3.4" fill="#e8f8e8"/><rect x="6.4" y="1.8" width="1.4" height="2.4" fill="#46c046"/><rect x="2.6" y="6.6" width="6.8" height="4" fill="#b8eab8"/></svg>
<svg style="position:absolute;left:786px;top:598px" width="13" height="13" viewBox="0 0 13 13"><path d="M12.5 1.5 L1.5 12.5 M12.5 5.5 L5.5 12.5 M12.5 9.5 L9.5 12.5" stroke="#9a9a9a" stroke-width="1"/><path d="M12.5 2.5 L2.5 12.5 M12.5 6.5 L6.5 12.5 M12.5 10.5 L10.5 12.5" stroke="#fff" stroke-width="1"/></svg>
<div style="position:absolute;left:784px;top:535px;width:15px;height:33px;background:linear-gradient(90deg,#e4e4e4,#fcfcfc 50%,#ececec)"></div>
<div style="position:absolute;left:784px;top:522px;width:14px;height:13.5px;border-radius:0 0 7px 7px;background:linear-gradient(90deg,#c8c8c8 0,#dcdcdc 2px,#e8e8e8 4px,#fdfdfd 8px,#f4f4f4 14px);box-shadow:0 1px 1px rgba(0,0,0,.25)"></div>
<div style="position:absolute;left:785px;top:551.5px;width:14px;height:1px;background:#cdcdcd"></div>
<svg style="position:absolute;left:787.4px;top:541.8px" width="7" height="5.2" viewBox="0 0 10 8" preserveAspectRatio="none"><path d="M5 0.4 L9.6 7.6 L0.4 7.6 Z" fill="#505050"/></svg>
<svg style="position:absolute;left:787.4px;top:557.2px" width="7" height="5.2" viewBox="0 0 10 8" preserveAspectRatio="none"><path d="M5 7.6 L9.6 0.4 L0.4 0.4 Z" fill="#505050"/></svg>
<svg style="position:absolute;left:233.6px;top:318.2px" width="7" height="7" viewBox="0 0 8 8"><path d="M1.8 5.2 Q2.8 2.8 5.8 2.4" fill="none" stroke="#333" stroke-width="1.7" stroke-linecap="round"/></svg>
<span class="st" style="left:6.30px;font-size:10.0px;font-weight:bold;-webkit-text-stroke-width:0;letter-spacing:-0.170px;">Hot Computer News</span>
<span class="st" style="left:138.80px;font-size:10.4px;letter-spacing:0.104px;top:595px">24398</span>
<span class="st" style="left:191.30px;font-size:10.4px;letter-spacing:0.000px;top:595px">0</span>
<span class="st" style="left:203.30px;font-size:10.4px;letter-spacing:0.000px;color:#a868d8;-webkit-text-stroke-width:.4px;top:595px">Σ</span>
<span class="st" style="left:211.80px;font-size:10.4px;letter-spacing:0.229px;top:595px">24398</span>
<span class="st" style="left:740.30px;font-size:10.4px;letter-spacing:-0.054px;top:595px">Modified</span>
<span class="lab" style="left:191.55px;font-size:9.3px;letter-spacing:0.711px;">GROUP</span>
<span class="lab" style="left:740.80px;font-size:9.3px;letter-spacing:0.257px;">RECIPIENT</span>
<div id="botline"></div>
<div id="lborder"></div><div id="rborder"></div><div id="lborder2"></div><div id="rborder2"></div>
</div>
</body></html>
